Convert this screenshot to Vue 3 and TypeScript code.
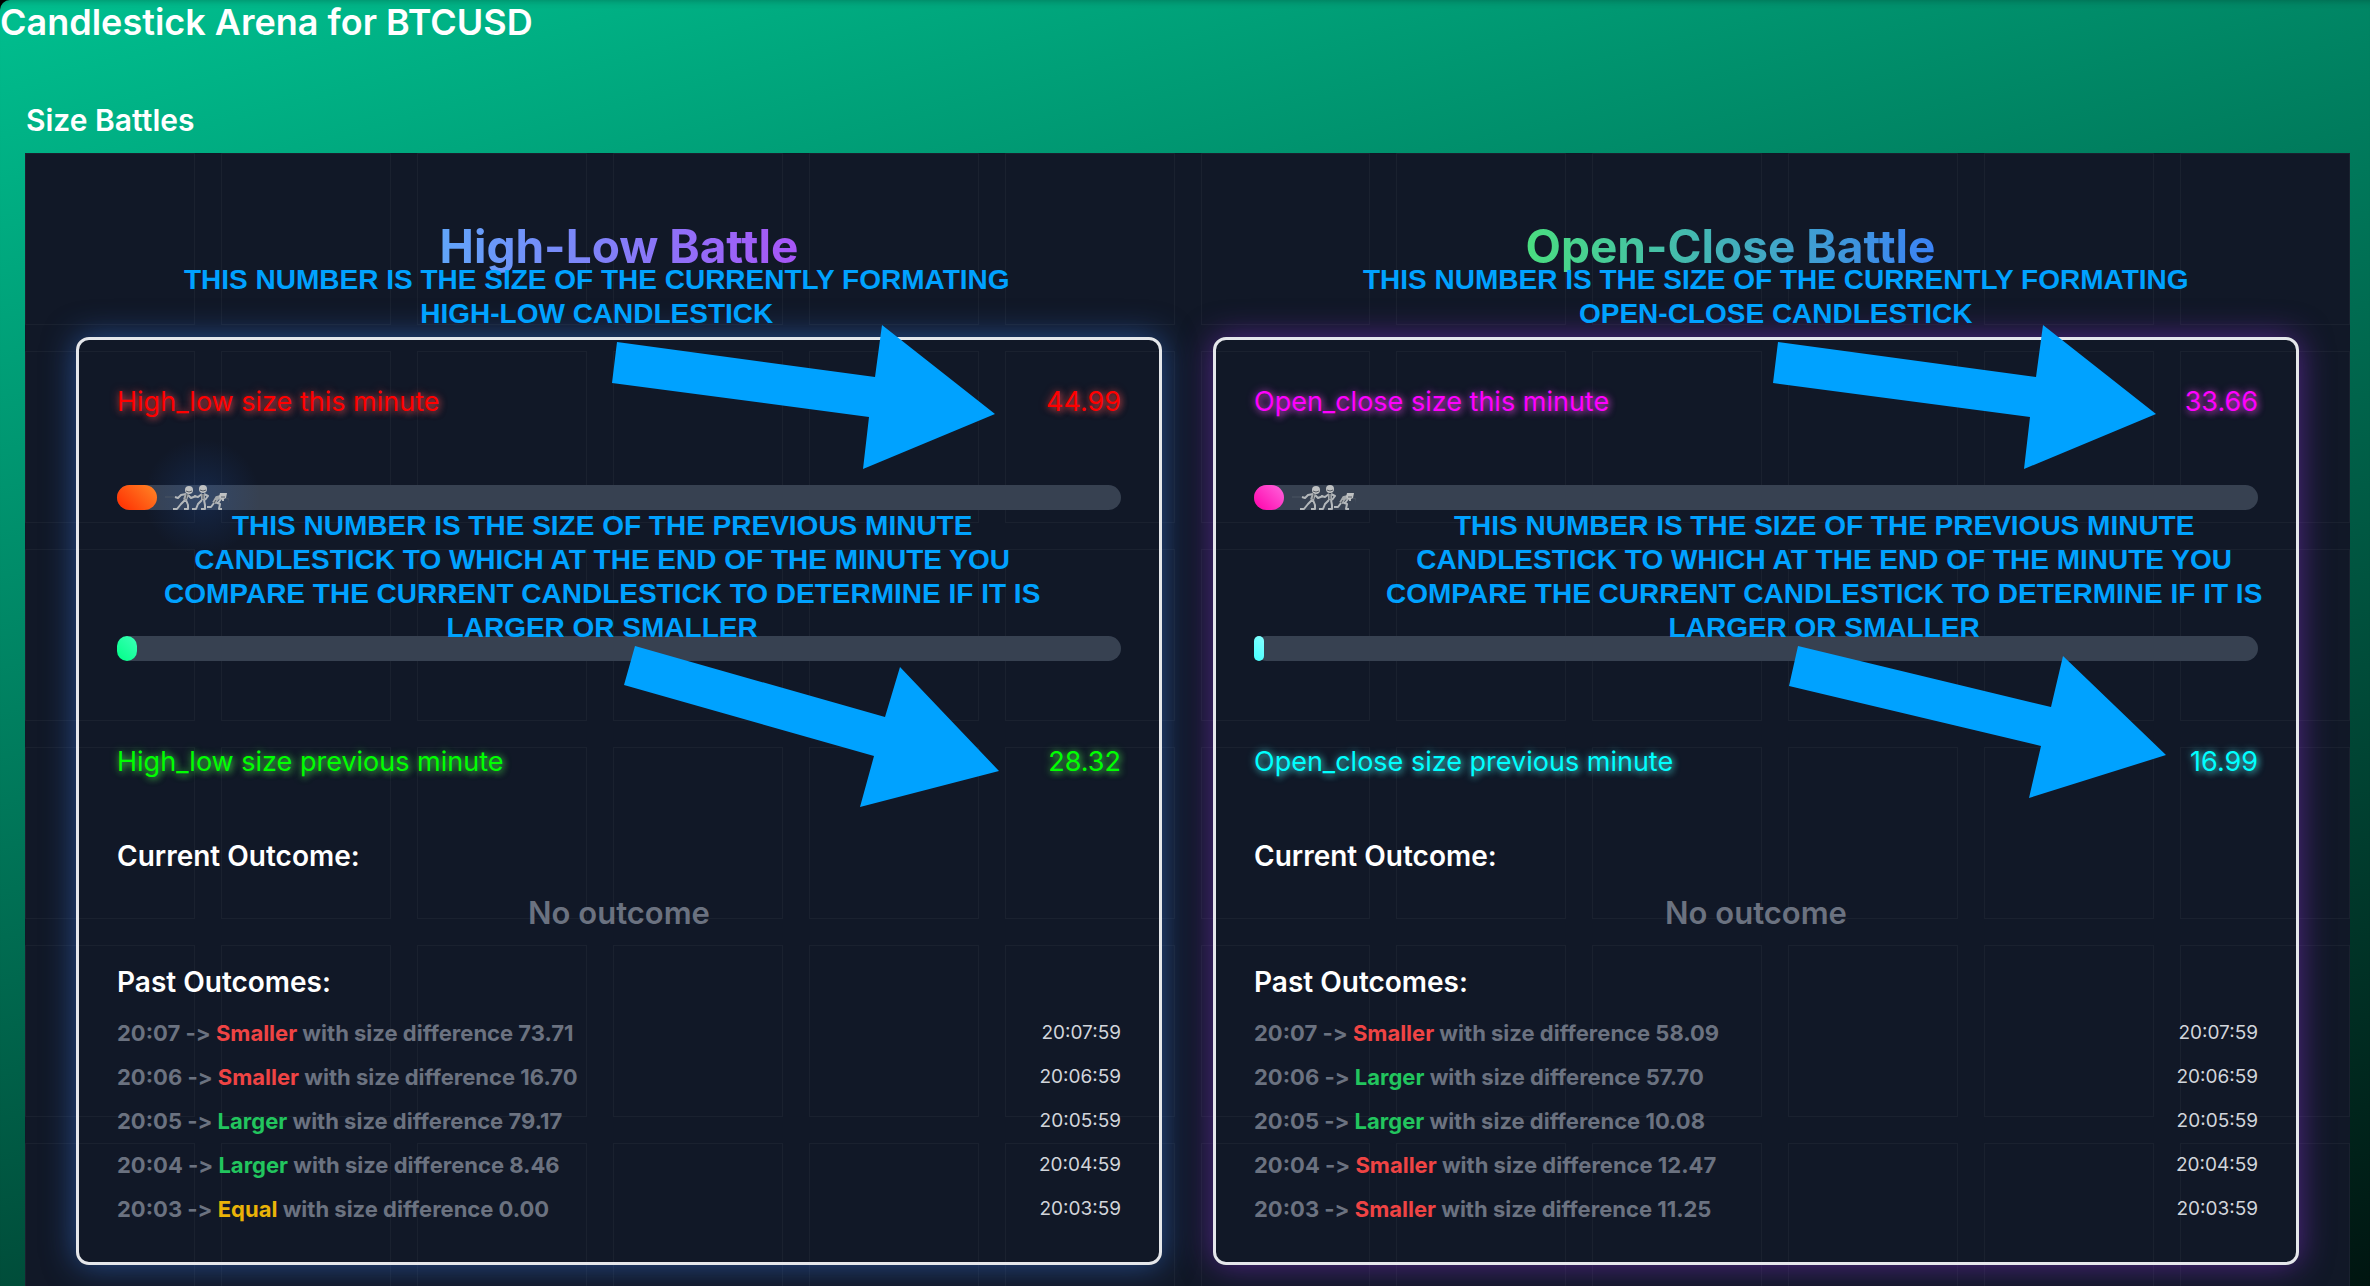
<script setup lang="ts">
interface Outcome {
  time: string
  result: 'Smaller' | 'Larger' | 'Equal'
  difference: string
}

interface Battle {
  id: string
  title: string
  kind: string
  current: string
  previous: string
  currentFill: number
  previousFill: number
  noteNow: string[]
  noteBefore: string[]
  arrowNow: string
  arrowBefore: string
  outcomes: Outcome[]
}

const previousNote = [
  'THIS NUMBER IS THE SIZE OF THE PREVIOUS MINUTE',
  'CANDLESTICK TO WHICH AT THE END OF THE MINUTE YOU',
  'COMPARE THE CURRENT CANDLESTICK TO DETERMINE IF IT IS',
  'LARGER OR SMALLER',
]

const battles: Battle[] = [
  {
    id: 'high-low',
    title: 'High-Low Battle',
    kind: 'High_low',
    current: '44.99',
    previous: '28.32',
    currentFill: 4,
    previousFill: 2,
    noteNow: ['THIS NUMBER IS THE SIZE OF THE CURRENTLY FORMATING', 'HIGH-LOW CANDLESTICK'],
    noteBefore: previousNote,
    arrowNow: '5,17 263,52 270,0 383,89 251,144 257,92 0,58',
    arrowBefore: '11,0 261,71 276,21 375,125 236,161 250,110 0,39',
    outcomes: [
      { time: '20:07', result: 'Smaller', difference: '73.71' },
      { time: '20:06', result: 'Smaller', difference: '16.70' },
      { time: '20:05', result: 'Larger', difference: '79.17' },
      { time: '20:04', result: 'Larger', difference: '8.46' },
      { time: '20:03', result: 'Equal', difference: '0.00' },
    ],
  },
  {
    id: 'open-close',
    title: 'Open-Close Battle',
    kind: 'Open_close',
    current: '33.66',
    previous: '16.99',
    currentFill: 3,
    previousFill: 1,
    noteNow: ['THIS NUMBER IS THE SIZE OF THE CURRENTLY FORMATING', 'OPEN-CLOSE CANDLESTICK'],
    noteBefore: previousNote,
    arrowNow: '5,17 263,52 270,0 383,89 251,144 257,92 0,58',
    arrowBefore: '9,0 262,61 274,10 377,109 240,152 252,100 0,40',
    outcomes: [
      { time: '20:07', result: 'Smaller', difference: '58.09' },
      { time: '20:06', result: 'Larger', difference: '57.70' },
      { time: '20:05', result: 'Larger', difference: '10.08' },
      { time: '20:04', result: 'Smaller', difference: '12.47' },
      { time: '20:03', result: 'Smaller', difference: '11.25' },
    ],
  },
]
</script>

<template>
  <main class="page">
    <h1 class="page-title">Candlestick Arena for BTCUSD</h1>
    <h2 class="section-title">Size Battles</h2>

    <section class="arena">
      <div class="grid-lines" aria-hidden="true">
        <span v-for="n in 72" :key="n" class="cell"></span>
      </div>

      <article v-for="b in battles" :key="b.id" class="battle" :class="b.id">
        <h3 class="battle-title"><span>{{ b.title }}</span></h3>

        <div class="card">
          <div class="reading now">
            <span>{{ b.kind }} size this minute</span>
            <span>{{ b.current }}</span>
          </div>

          <div class="track track-now">
            <div class="fill fill-now" :style="{ width: b.currentFill + '%' }"></div>
            <svg class="runners" viewBox="0 0 64 26" aria-hidden="true">
              <path class="rope" d="M0 12H10M60 13l4 1 1 10" />
              <path class="limbs" d="M21 9l-5 1-3 3-3-1M23 10l3 3 5-2M20 15l-4 4-4 5H8M21 15l2 5v4h-4" />
              <path class="limbs" d="M37 9l-4 3-4-1M39 9l4 2-3 4M37 15l-4 4-2 5h-4M39 15l1 5v4h-4" />
              <path class="limbs" d="M56 14l-3 4M57 15l2 0M50 17l5 2-1 5h3M49 18l-3 4-4 0" />
              <path class="torso" d="M22 9l-2 6M38 9v6M56 12l-4 1-3 5" />
              <circle class="head" cx="24" cy="5" r="4" />
              <circle class="head" cx="38" cy="4" r="4" />
              <path class="head" d="M55 8h7l-1 5-4 2-3-3z" />
              <path class="shade" d="M22 9l-1 5M38 9v5M21 6q3 2 6 0M35 5q3 2 6 0M51 15l-2 3M56 12h4" />
            </svg>
          </div>

          <div class="track track-before">
            <div class="fill fill-before" :style="{ width: b.previousFill + '%' }"></div>
          </div>

          <div class="reading before">
            <span>{{ b.kind }} size previous minute</span>
            <span>{{ b.previous }}</span>
          </div>

          <h4 class="label">Current Outcome:</h4>
          <p class="no-outcome">No outcome</p>

          <h4 class="label">Past Outcomes:</h4>
          <ul class="outcomes">
            <li v-for="o in b.outcomes" :key="o.time">
              <span class="summary">{{ o.time }} <span class="pointer">-&gt;</span> <b :class="o.result.toLowerCase()">{{ o.result }}</b> with size difference {{ o.difference }}</span>
              <time>{{ o.time }}:59</time>
            </li>
          </ul>

          <p class="note note-now">
            <span v-for="line in b.noteNow" :key="line">{{ line }}</span>
          </p>
          <p class="note note-before">
            <span v-for="line in b.noteBefore" :key="line">{{ line }}</span>
          </p>
          <svg class="arrow arrow-now" viewBox="0 0 384 145" aria-hidden="true"><polygon :points="b.arrowNow" /></svg>
          <svg class="arrow arrow-before" viewBox="0 0 378 162" aria-hidden="true"><polygon :points="b.arrowBefore" /></svg>
        </div>
      </article>
    </section>
  </main>
</template>

<style>
body {
  margin: 0;
  background: #000;
}
</style>

<style scoped>
* {
  box-sizing: border-box;
}

h1, h2, h3, h4, p, ul {
  margin: 0;
  padding: 0;
}

.page {
  height: 100vh;
  overflow: hidden;
  color: #fff;
  font-family: Inter, "Noto Sans", sans-serif;
  background: linear-gradient(165deg, #00bf8f, #001510);
  border-top-left-radius: 10px;
  box-shadow: inset 0 8px 8px -8px rgba(0, 0, 0, 0.3);
}

.page-title {
  font-size: 36px;
  line-height: 44px;
  font-weight: 600;
}

.section-title {
  margin: 56px 26px 0;
  font-size: 30px;
  line-height: 40px;
  font-weight: 600;
}

.arena {
  position: relative;
  display: grid;
  grid-template-columns: 1fr 1fr;
  gap: 51px;
  margin: 13px 20px 0 25px;
  padding: 65px 51px 51px;
  overflow: hidden;
  background: #111827;
}

.grid-lines {
  position: absolute;
  inset: 0;
  display: grid;
  grid-template-columns: repeat(12, 1fr);
  grid-auto-rows: 172px;
  gap: 26px;
}

.cell {
  border: 1px solid rgba(255, 255, 255, 0.04);
}

.battle {
  position: relative;
  min-width: 0;
}

.battle-title {
  margin-bottom: 63px;
  text-align: center;
  font-size: 46px;
  line-height: 56px;
  font-weight: 700;
}

.battle-title span {
  color: transparent;
  background-clip: text;
}

.high-low .battle-title span {
  background-image: linear-gradient(to right, #60a5fa, #a855f7);
}

.open-close .battle-title {
  padding-right: 51px;
}

.open-close .battle-title span {
  background-image: linear-gradient(to right, #4ade80, #3b82f6);
}

.card {
  position: relative;
  padding: 40px 38px 31px;
  border: 3px solid #e5e7eb;
  border-radius: 13px;
}

.high-low .card {
  box-shadow: 0 0 32px rgba(59, 130, 246, 0.5);
}

.open-close .card {
  box-shadow: 0 0 32px rgba(147, 51, 234, 0.5);
}

.reading {
  display: flex;
  justify-content: space-between;
  font-size: 27px;
  line-height: 44px;
}

.high-low .now {
  color: #f00;
  text-shadow: 0 0 8px rgba(255, 70, 70, 0.6), 2px 2px 6px rgba(255, 90, 90, 0.5);
}

.high-low .before {
  color: #0f0;
  text-shadow: 0 0 8px rgba(70, 255, 70, 0.6), 2px 2px 6px rgba(90, 255, 90, 0.5);
}

.open-close .now {
  color: #f0f;
  text-shadow: 0 0 8px rgba(255, 70, 255, 0.6), 2px 2px 6px rgba(255, 90, 255, 0.5);
}

.open-close .before {
  color: #0ff;
  text-shadow: 0 0 8px rgba(70, 255, 255, 0.6), 2px 2px 6px rgba(90, 255, 255, 0.5);
}

.track {
  position: relative;
  display: flex;
  height: 25px;
  border-radius: 13px;
  background: #374151;
}

.track-now {
  margin-top: 61px;
}

.high-low .track-now::before {
  content: "";
  position: absolute;
  top: -46px;
  left: 27px;
  width: 116px;
  height: 116px;
  background: radial-gradient(closest-side, rgba(37, 99, 200, 0.2), transparent);
}

.track-before {
  margin-top: 126px;
}

.fill {
  position: relative;
  border-radius: 13px;
}

.high-low .fill-now {
  background: linear-gradient(45deg, #ff2a00, #ff8726);
}

.high-low .fill-before {
  background: linear-gradient(45deg, #00ff87, #3dffb8);
}

.open-close .fill-now {
  background: linear-gradient(45deg, #ff00aa, #ff66dd);
}

.open-close .fill-before {
  background: linear-gradient(45deg, #44ffff, #88ffff);
}

.runners {
  position: relative;
  width: 64px;
  height: 26px;
  margin-left: 8px;
  fill: none;
}

.rope {
  stroke: #4b5563;
}

.limbs {
  stroke: #b4b8bb;
  stroke-width: 2;
  stroke-linejoin: round;
}

.torso {
  stroke: #a5a9ac;
  stroke-width: 4;
}

.head {
  fill: #bfc1c2;
}

.shade {
  stroke: #555b64;
}

.before {
  margin-top: 79px;
}

.label {
  font-size: 28px;
  line-height: 44px;
  font-weight: 600;
}

.before + .label {
  margin-top: 50px;
}

.no-outcome {
  margin: 13px 0 25px;
  text-align: center;
  font-size: 31px;
  line-height: 44px;
  font-weight: 600;
  color: #6b7280;
}

.outcomes {
  margin-top: 7px;
  list-style: none;
}

.outcomes li {
  display: flex;
  justify-content: space-between;
  line-height: 44px;
}

.summary {
  font-size: 22px;
  font-weight: 700;
  color: #6b7280;
}

.summary b {
  font-weight: inherit;
}

.pointer {
  font-variant-ligatures: none;
}

.smaller {
  color: #ef4444;
}

.larger {
  color: #22c55e;
}

.equal {
  color: #eab308;
}

time {
  font-size: 19px;
  color: #d1d5db;
}

.note {
  position: absolute;
  font-family: "Liberation Sans", Arial, sans-serif;
  font-size: 28px;
  line-height: 34px;
  font-weight: 700;
  text-align: center;
  white-space: nowrap;
  color: #00a2ff;
}

.note span {
  display: block;
}

.note-now {
  top: -77px;
  left: 105px;
}

.note-before {
  top: 169px;
  left: 85px;
}

.open-close .note-now {
  left: 147px;
}

.open-close .note-before {
  left: 170px;
}

.arrow {
  position: absolute;
  fill: #00a2ff;
}

.arrow-now {
  top: -15px;
  left: 533px;
  width: 384px;
  height: 145px;
}

.arrow-before {
  top: 306px;
  left: 545px;
  width: 378px;
  height: 162px;
}

.open-close .arrow-now {
  left: 557px;
}

.open-close .arrow-before {
  left: 573px;
}
</style>
